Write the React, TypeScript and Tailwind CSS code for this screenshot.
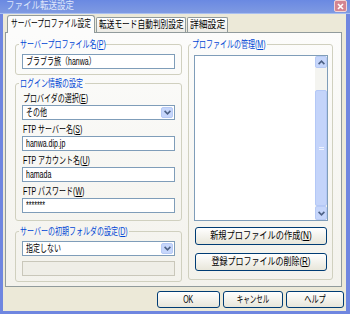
import type { ReactNode } from "react";

type Field = { label: string; hot: string; value: string; combo?: boolean };

const loginFields: Field[] = [
  { label: "プロバイダの選択", hot: "E", value: "その他", combo: true },
  { label: "FTP サーバー名", hot: "S", value: "hanwa.dip.jp" },
  { label: "FTP アカウント名", hot: "U", value: "hamada" },
  { label: "FTP パスワード", hot: "W", value: "*******" },
];

function T({ children, center = false, sx = "scale-x-[0.7]" }: { children: ReactNode; center?: boolean; sx?: string }) {
  return (
    <span className={`inline-block whitespace-nowrap ${sx} ${center ? "origin-center" : "origin-left"}`}>{children}</span>
  );
}

function Hot({ text, hot }: { text: string; hot: string }) {
  return (
    <>
      {text}(<u>{hot}</u>)
    </>
  );
}

function Chevron({ up = false }: { up?: boolean }) {
  return (
    <svg width="7" height="5" viewBox="0 0 7 5" className={up ? "rotate-180" : ""}>
      <path d="M0.6 0.9 3.5 3.8 6.4 0.9" fill="none" stroke="#4d6185" strokeWidth="1.6" />
    </svg>
  );
}

function TextBox({ value }: { value: string }) {
  return (
    <div className="h-[15px] border border-[#7f9db9] bg-white pl-[3px] leading-[13px]">
      <T>{value}</T>
    </div>
  );
}

function Combo({ value }: { value: string }) {
  return (
    <div className="flex h-[15px] border border-[#7f9db9] bg-white leading-[13px]">
      <div className="flex-1 pl-[3px]">
        <T>{value}</T>
      </div>
      <div className="m-px flex w-[12px] items-center justify-center rounded-[2px] border border-[#b7caf5] bg-[#c6d6fb]">
        <Chevron />
      </div>
    </div>
  );
}

function Group({ title, legendW, className = "", children }: { title: ReactNode; legendW: string; className?: string; children: ReactNode }) {
  return (
    <fieldset className={`rounded-[3px] border border-[#d0d0bf] px-[6px] ${className}`}>
      <legend className={`ml-[-3px] px-[1px] leading-[11px] text-[#0046d5] ${legendW}`}>
        <T>{title}</T>
      </legend>
      {children}
    </fieldset>
  );
}

function XpButton({ children, className = "" }: { children: ReactNode; className?: string }) {
  return (
    <div
      className={`flex items-center justify-center rounded-[3px] border border-[#003c74] bg-linear-to-b from-white to-[#e8e6da] leading-[12px] ${className}`}
    >
      {children}
    </div>
  );
}

export default function App() {
  return (
    <div className="flex h-[314px] w-[350px] flex-col bg-[#6f86e0] font-['Liberation_Sans','Noto_Sans_CJK_JP',sans-serif] text-[10px] text-black">
      {/* title bar */}
      <div className="flex h-[14px] items-start justify-between border-b border-[#a9bff0] bg-linear-to-b from-[#6a89e2] to-[#7f9ae2] pl-[6px] pr-[3px]">
        <span className="leading-[12px] text-[#dfe6fb]">
          <T sx="scale-x-[0.85]">ファイル転送設定</T>
        </span>
        <div className="flex h-[12px] w-[13px] items-center justify-center rounded-[2px] border border-[#f2d6d6] bg-[#d48590]">
          <svg width="7" height="7" viewBox="0 0 7 7">
            <path d="M1 1 6 6M6 1 1 6" stroke="white" strokeWidth="1.6" />
          </svg>
        </div>
      </div>

      {/* body */}
      <div className="mx-[3px] mr-[4px] flex flex-1 flex-col bg-[#ece9d8] pt-px">
        {/* tabs */}
        <div className="flex h-[17px] items-end pl-[4px]">
          <div className="relative z-10 mb-[-1px] h-[18px] w-[88px] rounded-t-[3px] border border-b-0 border-[#919b9c] bg-[#fcfcfb] pl-[3px] leading-[16px]">
            <T sx="scale-x-[0.67]">サーバープロファイル設定</T>
          </div>
          <div className="ml-px h-[15px] w-[90px] rounded-t-[2px] border border-b-0 border-[#919b9c] bg-linear-to-b from-white to-[#ecebe5] pl-[2px] leading-[14px]">
            <T sx="scale-x-[0.77]">転送モード自動判別設定</T>
          </div>
          <div className="ml-px h-[15px] w-[41px] rounded-t-[2px] border border-b-0 border-[#919b9c] bg-linear-to-b from-white to-[#ecebe5] pl-[2px] leading-[14px]">
            <T sx="scale-x-[0.88]">詳細設定</T>
          </div>
        </div>

        {/* panel */}
        <div className="ml-[2px] flex h-[255px] w-[337px] gap-[6px] border border-[#919b9c] bg-linear-to-b from-[#fcfcfb] to-[#f3f2ec] pl-[9px] pt-[6px]">
          {/* left column */}
          <div className="flex w-[167px] flex-col">
            <Group title={<Hot text="サーバープロファイル名" hot="P" />} legendW="w-[86px]" className="pb-[5px]">
              <div className="mt-[4px]">
                <TextBox value="ブラブラ旅（hanwa）" />
              </div>
            </Group>

            <Group title="ログイン情報の設定" legendW="w-[66px]" className="mt-[3px] pb-[7px]">
              {loginFields.map((f) => (
                <div key={f.hot} className="mt-[4px]">
                  <div className="h-[11px] pl-px leading-[11px]">
                    <T>
                      <Hot text={f.label} hot={f.hot} />
                    </T>
                  </div>
                  <div className="mt-px">{f.combo ? <Combo value={f.value} /> : <TextBox value={f.value} />}</div>
                </div>
              ))}
            </Group>

            <Group title={<Hot text="サーバーの初期フォルダの設定" hot="D" />} legendW="w-[110px]" className="mt-[5px] pb-[5px]">
              <div className="mt-[4px]">
                <Combo value="指定しない" />
              </div>
              <div className="mt-[5px] h-[15px] border border-[#c9c7ba] bg-[#efeee7]" />
            </Group>
          </div>

          {/* right column */}
          <div className="flex w-[145px] flex-col">
            <Group title={<Hot text="プロファイルの管理" hot="M" />} legendW="w-[76px]" className="pb-[8px] pr-[4px] pl-[5px]">
              <div className="mt-[5px] flex h-[166px] border border-[#7f9db9] bg-white">
                <div className="flex-1" />
                <div className="flex w-[12px] flex-col bg-[#f4f4f0]">
                  <div className="flex h-[12px] items-center justify-center rounded-[2px] border border-[#b7caf5] bg-[#c6d6fb]">
                    <Chevron up />
                  </div>
                  <div className="h-[22px]" />
                  <div className="flex flex-1 items-center justify-center rounded-[2px] border border-[#b4c8f6] bg-[#c4d4fa]">
                    <div className="h-[3px] w-[5px] border-y border-[#eef3ff]" />
                  </div>
                  <div className="flex h-[14px] items-center justify-center rounded-[2px] border border-[#b7caf5] bg-[#c6d6fb]">
                    <Chevron />
                  </div>
                </div>
              </div>
              <XpButton className="mx-px mt-[6px] h-[18px]">
                <T center sx="scale-x-[0.82]">
                  <Hot text="新規プロファイルの作成" hot="N" />
                </T>
              </XpButton>
              <XpButton className="mx-px mt-[8px] h-[18px]">
                <T center sx="scale-x-[0.8]">
                  <Hot text="登録プロファイルの削除" hot="R" />
                </T>
              </XpButton>
            </Group>
          </div>
        </div>

        {/* dialog buttons */}
        <div className="mt-[4px] flex h-[17px] justify-end gap-[3px] pr-[2px]">
          <XpButton className="w-[63px]">
            <T center>OK</T>
          </XpButton>
          <XpButton className="w-[60px]">
            <T center sx="scale-x-[0.65]">キャンセル</T>
          </XpButton>
          <XpButton className="w-[58px]">
            <T center sx="scale-x-[0.72]">ヘルプ</T>
          </XpButton>
        </div>
      </div>
      <div className="h-[3px]" />
    </div>
  );
}
